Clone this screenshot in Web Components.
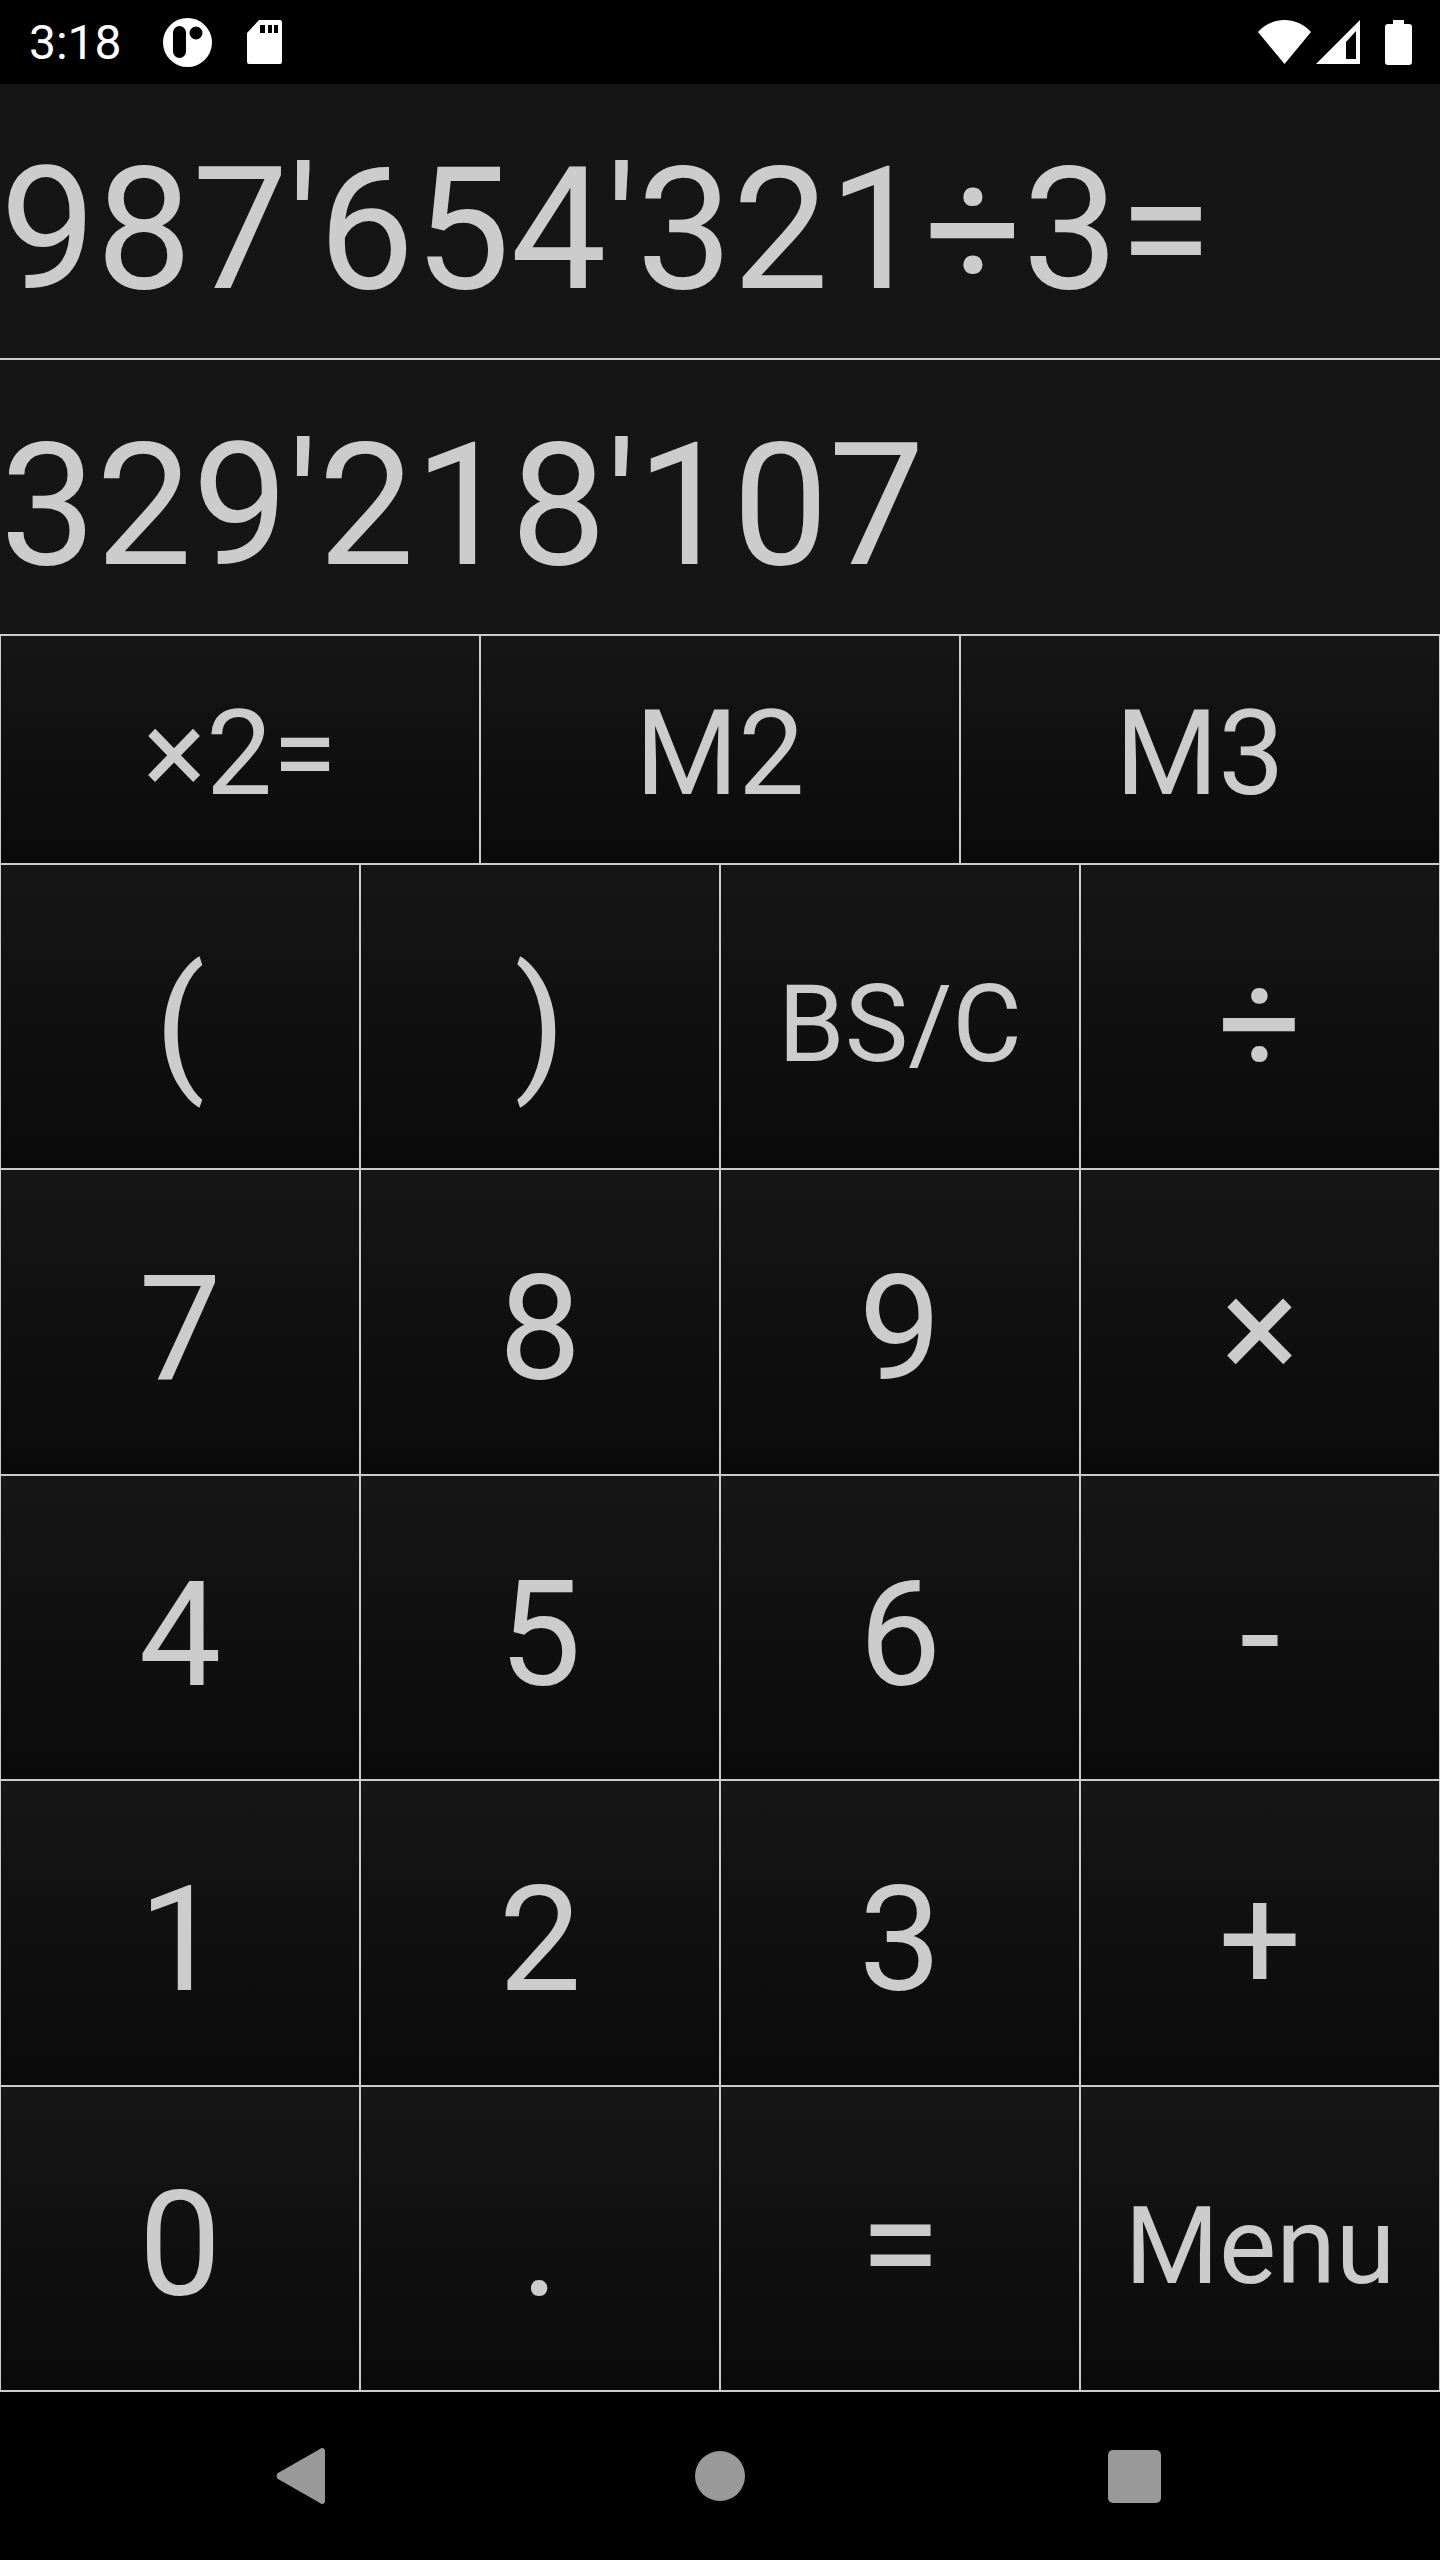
<!DOCTYPE html>
<html>
<head>
<meta charset="utf-8">
<style>
html, body { margin: 0; padding: 0; background: #000; }
body { width: 1440px; height: 2560px; overflow: hidden; font-family: Roboto, sans-serif; display: flex; flex-direction: column; }
</style>
</head>
<body>
<status-bar></status-bar>
<calc-display>987'654'321÷3=</calc-display>
<calc-display>329'218'107</calc-display>
<calc-keypad>
  <key-row class="top">
    <calc-key size="118">×2=</calc-key>
    <calc-key size="118">M2</calc-key>
    <calc-key size="118">M3</calc-key>
  </key-row>
  <key-row>
    <calc-key size="147">(</calc-key>
    <calc-key size="147">)</calc-key>
    <calc-key size="107">BS/C</calc-key>
    <calc-key size="147">÷</calc-key>
  </key-row>
  <key-row>
    <calc-key size="147">7</calc-key>
    <calc-key size="147">8</calc-key>
    <calc-key size="147">9</calc-key>
    <calc-key size="147">×</calc-key>
  </key-row>
  <key-row>
    <calc-key size="147">4</calc-key>
    <calc-key size="147">5</calc-key>
    <calc-key size="147">6</calc-key>
    <calc-key size="147">-</calc-key>
  </key-row>
  <key-row>
    <calc-key size="147">1</calc-key>
    <calc-key size="147">2</calc-key>
    <calc-key size="147">3</calc-key>
    <calc-key size="147">+</calc-key>
  </key-row>
  <key-row>
    <calc-key size="147">0</calc-key>
    <calc-key size="147">.</calc-key>
    <calc-key size="147">=</calc-key>
    <calc-key size="108">Menu</calc-key>
  </key-row>
</calc-keypad>
<nav-bar></nav-bar>

<script>
class StatusBar extends HTMLElement {
    constructor() {
        super();
        this.attachShadow({mode: "open"}).innerHTML = `
        <style>
        :host { display: flex; align-items: center; height: 84px; background: #000; color: #fff; padding: 0 28px 0 29px; box-sizing: border-box; flex: none; }
        .time { font-size: 48px; line-height: 84px; width: 134px; padding-top: 2px; }
        .left { display: flex; align-items: center; gap: 35px; }
        .right { margin-left: auto; display: flex; align-items: center; }
        svg { display: block; fill: #fff; }
        </style>
        <span class="time">3:18</span>
        <div class="left">
            <svg width="49" height="49" viewBox="0 0 49 49"><path fill-rule="evenodd" d="M24.500 0a24.500 24.500 0 1 0 0 49a24.500 24.500 0 1 0 0-49zM16.500 8a6.500 6.500 0 0 1 6.500 6.500v19a6.500 6.500 0 0 1-13 0v-19a6.500 6.500 0 0 1 6.500-6.500zM33 8.500a6.500 6.500 0 1 1 0 13a6.500 6.500 0 1 1 0-13z"/></svg>
            <svg width="35" height="44" viewBox="0 0 35 44"><path fill-rule="evenodd" d="M12 0H33a2 2 0 0 1 2 2V42a2 2 0 0 1-2 2H2a2 2 0 0 1-2-2V13zM13 5v8h5V5zM21 5v8h4V5zM27 5v8h4V5z"/></svg>
        </div>
        <div class="right">
            <svg width="53" height="44" viewBox="0 0 53 44"><path d="M0 12C7 4 17 0 26.500 0S46 4 53 12L26.500 44z"/></svg>
            <svg width="44" height="44" viewBox="0 0 44 44" style="margin-left:5px"><path fill-rule="evenodd" d="M44 0V44H0zM40 11L30 22V39H40z"/></svg>
            <svg width="27" height="45" viewBox="0 0 27 45" style="margin-left:25px"><path d="M8 0H19V4H24a3 3 0 0 1 3 3V42a3 3 0 0 1-3 3H3a3 3 0 0 1-3-3V7a3 3 0 0 1 3-3H8z"/></svg>
        </div>`;
    }
}

class CalcDisplay extends HTMLElement {
    constructor() {
        super();
        this.attachShadow({mode: "open"}).innerHTML = `
        <style>
        :host { display: flex; align-items: center; height: 276px; box-sizing: border-box; background: #151515; color: #ccc; font-size: 171px; white-space: nowrap; border-bottom: 2px solid #ccc; flex: none; padding-top: 16px; }
        </style>
        <slot></slot>`;
    }
}

class CalcKeypad extends HTMLElement {
    constructor() {
        super();
        this.attachShadow({mode: "open"}).innerHTML = `
        <style>
        :host { display: flex; flex-direction: column; gap: 2px; height: 1756px; box-sizing: border-box; background: #ccc; padding: 0 1px 2px; flex: none; }
        </style>
        <slot></slot>`;
    }
}

class KeyRow extends HTMLElement {
    constructor() {
        super();
        this.attachShadow({mode: "open"}).innerHTML = `
        <style>
        :host { display: flex; gap: 2px; flex: 1 1 0; --pad: 15px; }
        :host(.top) { flex: 0 0 227px; --pad: 8px; }
        ::slotted(*) { flex: 1 1 0; }
        </style>
        <slot></slot>`;
    }
}

class CalcKey extends HTMLElement {
    constructor() {
        super();
        this.attachShadow({mode: "open"}).innerHTML = `
        <style>
        :host { display: flex; align-items: center; justify-content: center; background: linear-gradient(#161616, #0a0a0a); color: #ccc; font-size: var(--size); line-height: 1; white-space: nowrap; padding-top: var(--pad); box-sizing: border-box; }
        </style>
        <slot></slot>`;
        this.style.setProperty("--size", this.getAttribute("size") + "px");
    }
}

class NavBar extends HTMLElement {
    constructor() {
        super();
        this.attachShadow({mode: "open"}).innerHTML = `
        <style>
        :host { display: flex; flex: 1; align-items: center; background: #000; padding-left: 276px; box-sizing: border-box; }
        svg { display: block; fill: #999; }
        </style>
        <svg width="49" height="56" viewBox="0 0 49 56"><path d="M46 0a3 3 0 0 1 3 3V53a3 3 0 0 1-3 3a3 3 0 0 1-2-1L2 31a4 4 0 0 1 0-6L44 1a3 3 0 0 1 2-1z"/></svg>
        <svg width="50" height="50" viewBox="0 0 50 50" style="margin-left:370px"><circle cx="25" cy="25" r="25"/></svg>
        <svg width="53" height="53" viewBox="0 0 53 53" style="margin-left:363px"><rect width="53" height="53" rx="5"/></svg>`;
    }
}

customElements.define("status-bar", StatusBar);
customElements.define("calc-display", CalcDisplay);
customElements.define("calc-keypad", CalcKeypad);
customElements.define("key-row", KeyRow);
customElements.define("calc-key", CalcKey);
customElements.define("nav-bar", NavBar);
</script>
</body>
</html>
